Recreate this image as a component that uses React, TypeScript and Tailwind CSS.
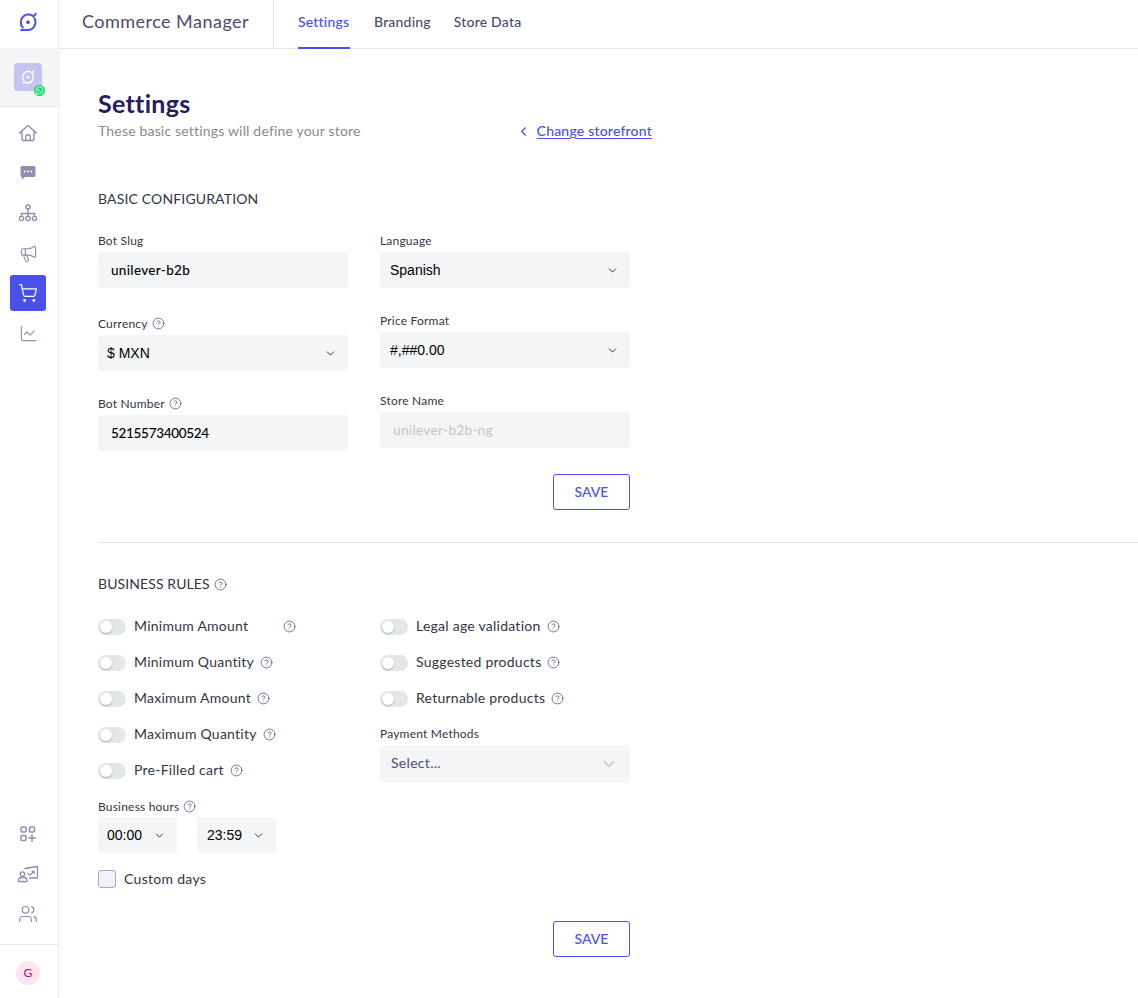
import { useState } from "react";
import { ChartLine, ChevronDown, ChevronLeft, CircleHelp, Megaphone, ShoppingCart, Users } from "lucide-react";
import { FaWhatsapp } from "react-icons/fa";

function Logo({ className, color }: { className: string; color: string }) {
  return (
    <svg viewBox="0 0 24 24" fill="none" stroke={color} strokeWidth="2.200" strokeLinecap="round" className={className}>
      <path d="M19 8A8.500 8.500 0 0 1 11.500 20.700H4.500" />
      <path d="M6.300 18A8.500 8.500 0 0 1 17 5" />
      <path d="M18 6.200 20.500 3" />
      <circle cx="12" cy="12.200" r="2" fill={color} stroke="none" />
    </svg>
  );
}

function HomeIcon() {
  return (
    <svg viewBox="0 0 20 20" className="h-5 w-5" fill="none" stroke="#8f8eac" strokeWidth="1.400" strokeLinecap="round" strokeLinejoin="round">
      <path d="M1.500 10 10 2.500 18.500 10" />
      <path d="M4 8.500V16a1.500 1.500 0 0 0 1.500 1.500h9A1.500 1.500 0 0 0 16 16V8.500" />
      <path d="M7.800 17.500V13a1 1 0 0 1 1-1h2.400a1 1 0 0 1 1 1v4.500" />
    </svg>
  );
}

function ChatIcon() {
  return (
    <svg viewBox="0 0 18 18" className="h-[18px] w-[18px]" fill="#8f8eac">
      <path d="M3 2h12a1.500 1.500 0 0 1 1.500 1.500v8A1.500 1.500 0 0 1 15 13H6l-3 2.600V13A1.500 1.500 0 0 1 1.500 11.500v-8A1.500 1.500 0 0 1 3 2Z" />
      <circle cx="5.700" cy="7.500" r="0.900" fill="#fff" />
      <circle cx="9" cy="7.500" r="0.900" fill="#fff" />
      <circle cx="12.300" cy="7.500" r="0.900" fill="#fff" />
    </svg>
  );
}

function TreeIcon() {
  return (
    <svg viewBox="0 0 20 20" className="h-5 w-5" fill="none" stroke="#8f8eac" strokeWidth="1.400">
      <circle cx="10" cy="4" r="2" />
      <circle cx="3.500" cy="15.500" r="2.100" />
      <circle cx="10" cy="15.500" r="2.100" />
      <circle cx="16.500" cy="15.500" r="2.100" />
      <path d="M10 6v7.400M3.500 13.400V10.500h13v2.900" />
    </svg>
  );
}

function AppsIcon() {
  return (
    <svg viewBox="0 0 18 18" className="h-[18px] w-[18px]" fill="none" stroke="#8f8eac" strokeWidth="1.500">
      <rect x="2" y="2" width="5" height="5" rx="1" />
      <rect x="10.500" y="2" width="5" height="5" rx="1" />
      <rect x="2" y="10.500" width="5" height="5" rx="1" />
      <path d="M13 9.800v6.400M9.800 13h6.400" strokeLinecap="round" />
    </svg>
  );
}

function TrainingIcon() {
  return (
    <svg viewBox="0 0 22 20" className="h-[20px] w-[22px]" fill="none" stroke="#8f8eac" strokeWidth="1.300" strokeLinecap="round" strokeLinejoin="round">
      <path d="M8 4.500 20.500 2.500V14H12.500" />
      <circle cx="5.500" cy="10" r="2.200" />
      <path d="M1.500 17.500V16a2.500 2.500 0 0 1 2.500-2.500h3a3 3 0 0 1 3 3v1Z" />
      <path d="m11 9.500 2 1.500 4-3.500M15 7.300h2.200v2" />
    </svg>
  );
}

function SideItem({ children, active }: { children: React.ReactNode; active?: boolean }) {
  return (
    <div className={`flex h-9 w-9 items-center justify-center rounded-[3px] ${active ? "bg-[#4a50ec]" : ""}`}>
      {children}
    </div>
  );
}

function Sidebar() {
  const icon = "h-[19px] w-[19px] text-[#8f8eac]";
  return (
    <aside className="flex h-[998px] w-[59px] shrink-0 flex-col items-center border-r border-[#eef0f2] bg-white shadow-[1px_0_3px_rgba(0,0,0,0.03)]">
      <div className="flex h-12 w-full items-center justify-center pr-[2px] pb-[4px]">
        <Logo className="h-[22px] w-[22px]" color="#4a50ec" />
      </div>
      <div className="flex h-[59px] w-full items-center justify-center border-b border-[#e4e7ea] bg-[#f4f5f7] pr-[2px]">
        <div className="relative flex h-7 w-7 items-center justify-center rounded-[4px] bg-[#c3c4ef]">
          <Logo className="h-[16px] w-[16px]" color="#fff" />
          <span className="absolute -right-[3px] -bottom-[5px] flex h-[11px] w-[11px] items-center justify-center rounded-full bg-[#25d366] text-white">
            <FaWhatsapp size={9} />
          </span>
        </div>
      </div>
      <nav className="mt-2 flex flex-col items-center gap-1 pr-[2px]">
        <SideItem><HomeIcon /></SideItem>
        <SideItem><ChatIcon /></SideItem>
        <SideItem><TreeIcon /></SideItem>
        <SideItem><Megaphone className={icon} strokeWidth={1.4} /></SideItem>
        <SideItem active><ShoppingCart className="h-[20px] w-[20px] text-white" strokeWidth={1.5} /></SideItem>
        <SideItem><ChartLine className={icon} strokeWidth={1.4} /></SideItem>
      </nav>
      <nav className="mt-auto mb-3 flex flex-col items-center gap-1 pr-[2px]">
        <SideItem><AppsIcon /></SideItem>
        <SideItem><TrainingIcon /></SideItem>
        <SideItem><Users className="h-[20px] w-[20px] text-[#8f8eac]" strokeWidth={1.4} /></SideItem>
      </nav>
      <div className="flex h-[54px] w-full items-start justify-center border-t border-[#e4e7ea] pt-4 pr-[2px]">
        <div className="flex h-6 w-6 items-center justify-center rounded-full bg-[#fce4f1] text-[12px] text-[#b0125f]">G</div>
      </div>
    </aside>
  );
}

function Help({ size = 13, className = "" }: { size?: number; className?: string }) {
  return <CircleHelp size={size} strokeWidth={1.4} className={`shrink-0 text-[#4d4a7e] ${className}`} />;
}

function Label({ children, help }: { children: string; help?: boolean }) {
  return (
    <div className="flex h-[17px] items-center gap-[4px] pb-[2px] text-[12px] tracking-[0.2px] text-[#333644]">
      {children}
      {help && <Help size={13} />}
    </div>
  );
}

function TextBox({ value, disabled, tracking = "tracking-[0.25px]" }: { value: string; disabled?: boolean; tracking?: string }) {
  return (
    <div className={`mt-[2px] flex h-9 items-center rounded-[3px] bg-[#f4f5f7] pl-[13px] text-[13.5px] font-medium ${tracking} ${disabled ? "text-[#c3c7cb]" : "text-black"}`}>
      {value}
    </div>
  );
}

function SelectBox({ value, w = "w-full", tight, className = "" }: { value: string; w?: string; tight?: boolean; className?: string }) {
  return (
    <div className={`flex h-9 items-center justify-between rounded-[3px] bg-[#f4f5f7] pr-[11px] font-['Liberation_Sans',sans-serif] text-[14px] text-black ${tight ? "pl-[9px]" : "pl-[10px]"} ${w} ${className}`}>
      {value}
      <ChevronDown size={13} strokeWidth={1.8} className="text-[#333]" />
    </div>
  );
}

function Toggle({ label, help, spacer }: { label: string; help?: boolean; spacer?: boolean }) {
  const [on, setOn] = useState(false);
  return (
    <div className="flex h-9 items-center text-[14px] tracking-[0.25px] text-[#333644]">
      <button
        onClick={() => setOn(!on)}
        className="relative mr-2 h-4 w-7 rounded-full bg-[#e3e7e8]"
      >
        <span className={`absolute top-[2px] h-3 w-3 rounded-full bg-white shadow-[0_1px_2px_rgba(0,0,0,0.25)] ${on ? "left-[14px]" : "left-[2px]"}`} />
      </button>
      <span className="mb-[3px]">{label}</span>
      {help && <Help size={13} className={`mb-[2px] ${spacer ? "ml-[35px]" : "ml-[6px]"}`} />}
    </div>
  );
}

function SaveButton() {
  return (
    <button className="h-9 w-[77px] rounded-[3px] border border-[#4a50ec] bg-white pb-[2px] text-[14px] font-medium text-[#4a50ec]">
      SAVE
    </button>
  );
}

export default function App() {
  return (
    <div className="flex h-[998px] w-[1138px] overflow-hidden bg-white font-['Lato',sans-serif]">
      <Sidebar />
      <div className="flex min-w-0 flex-1 flex-col">
        <header className="flex h-[49px] shrink-0 border-b border-[#e4e7ea]">
          <div className="flex w-[215px] items-center border-r border-[#e4e7ea] pb-[5px] pl-[23px] text-[18px] tracking-[0.47px] text-[#4d4a6e]">
            Commerce Manager
          </div>
          <nav className="ml-[24px] flex gap-6 text-[14px] font-medium tracking-[0.2px] text-[#4d4a6e]">
            <a className="-mb-px flex w-[52px] items-center border-b-2 border-[#4a50ec] pb-[5px] text-[#4a50ec]">Settings</a>
            <a className="flex items-center pb-[5px]">Branding</a>
            <a className="-ml-px flex items-center pb-[5px]">Store Data</a>
          </nav>
        </header>

        <main className="pl-[39px]">
          <div className="mt-[39px] flex w-[554px] items-end justify-between">
            <div>
              <h1 className="text-[25px] leading-[30px] font-bold tracking-[0.3px] text-[#24205f]">Settings</h1>
              <p className="mt-[4px] text-[14px] leading-[18px] tracking-[0.18px] text-[#858b8f]">These basic settings will define your store</p>
            </div>
            <a className="flex items-center text-[14px] leading-[18px] font-medium tracking-[0.2px] text-[#4a50ec]">
              <ChevronLeft size={15} strokeWidth={1.8} className="mr-[6px] -ml-[3px]" />
              <span className="underline underline-offset-2">Change storefront</span>
            </a>
          </div>

          <h2 className="mt-[50px] text-[14px] leading-[18px] tracking-[0.15px] text-[#333644]">BASIC CONFIGURATION</h2>

          <div className="mt-[25px] flex gap-8">
            <div className="flex w-[250px] flex-col">
              <Label>Bot Slug</Label>
              <TextBox value="unilever-b2b" tracking="tracking-[0.32px]" />
              <div className="mt-[28px]"><Label help>Currency</Label></div>
              <SelectBox value="$ MXN" tight className="mt-[2px]" />
              <div className="mt-[25px]"><Label help>Bot Number</Label></div>
              <TextBox value="5215573400524" tracking="tracking-[-0.3px]" />
            </div>
            <div className="flex w-[250px] flex-col">
              <Label>Language</Label>
              <SelectBox value="Spanish" className="mt-[2px]" />
              <div className="mt-[25px]"><Label>Price Format</Label></div>
              <SelectBox value="#,##0.00" className="mt-[2px]" />
              <div className="mt-[25px]"><Label>Store Name</Label></div>
              <TextBox value="unilever-b2b-ng" disabled tracking="tracking-[0.35px]" />
              <div className="mt-[26px] flex justify-end"><SaveButton /></div>
            </div>
          </div>

          <hr className="mt-[32px] border-[#e4e7ea]" />

          <h2 className="mt-[32px] flex items-center gap-[4px] text-[14px] leading-[18px] tracking-[0.1px] text-[#333644]">
            BUSINESS RULES <Help size={13} />
          </h2>

          <div className="mt-[16px] flex gap-8">
            <div className="flex w-[250px] flex-col">
              <Toggle label="Minimum Amount" help spacer />
              <Toggle label="Minimum Quantity" help />
              <Toggle label="Maximum Amount" help />
              <Toggle label="Maximum Quantity" help />
              <Toggle label="Pre-Filled cart" help />
              <div className="mt-[10px]"><Label help>Business hours</Label></div>
              <div className="mt-[1px] flex gap-5">
                <SelectBox value="00:00" tight w="w-[79px]" />
                <SelectBox value="23:59" w="w-[79px]" />
              </div>
              <label className="mt-[17px] flex h-[18px] items-center gap-2 text-[14px] tracking-[0.3px] text-[#333644]">
                <span className="h-[18px] w-[18px] rounded-[3px] border border-[#a6a6cf] bg-[#f1f1fd]" />
                <span className="mb-[2px]">Custom days</span>
              </label>
            </div>
            <div className="flex w-[250px] flex-col">
              <Toggle label="Legal age validation" help />
              <Toggle label="Suggested products" help />
              <Toggle label="Returnable products" help />
              <div className="mt-[9px]"><Label>Payment Methods</Label></div>
              <div className="mt-[2px] flex h-[38px] items-center justify-between rounded-[3px] bg-[#f4f5f7] pr-[12px] pl-[11px] text-[14px] tracking-[0.3px] text-[#4d4a7e]">
                <span className="mb-[4px]">Select...</span>
                <ChevronDown size={18} strokeWidth={2.4} className="text-[#cccccc]" />
              </div>
            </div>
          </div>

          <div className="mt-[33px] flex w-[532px] justify-end"><SaveButton /></div>
        </main>
      </div>
    </div>
  );
}
